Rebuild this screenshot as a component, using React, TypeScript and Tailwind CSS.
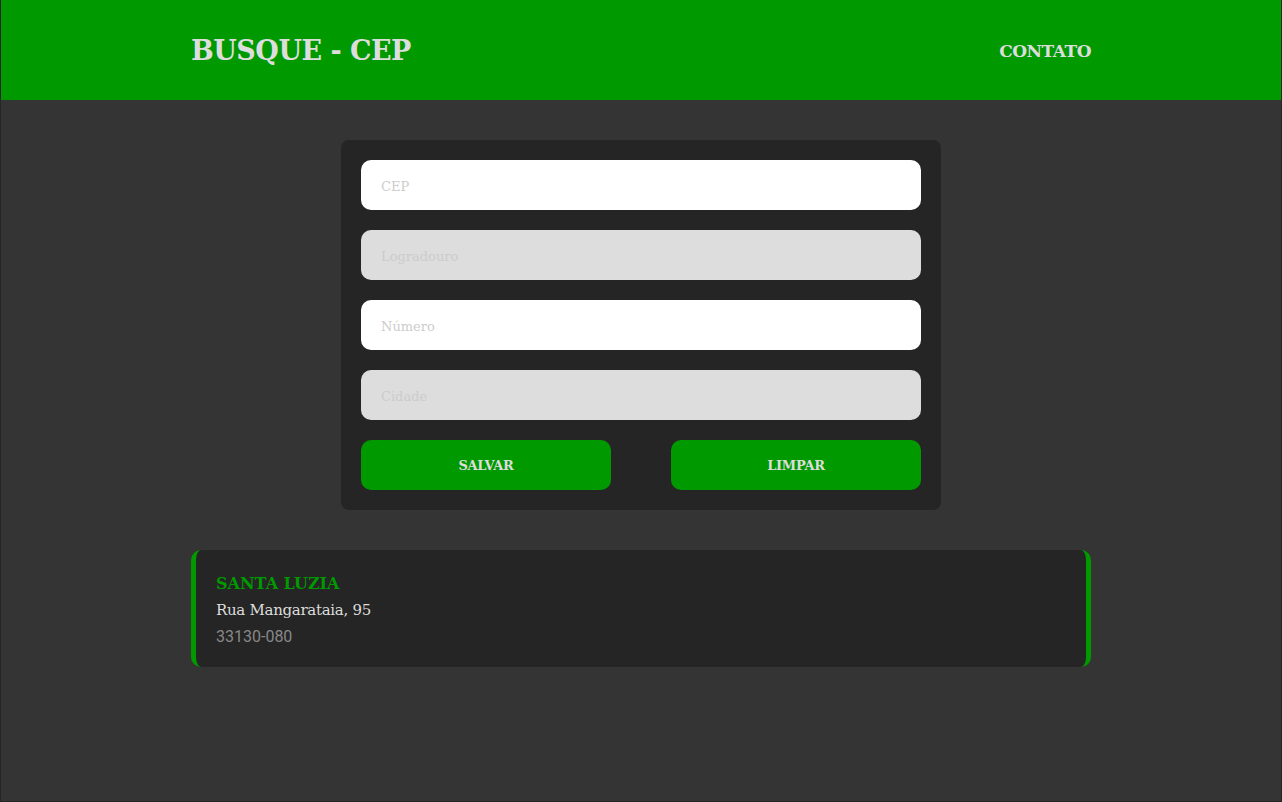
import React from 'react'

const slab = { fontFamily: '"DejaVu Serif", "Liberation Serif", serif' }

interface Field {
  placeholder: string
  disabled: boolean
}

const FIELDS: Field[] = [
  { placeholder: 'CEP', disabled: false },
  { placeholder: 'Logradouro', disabled: true },
  { placeholder: 'Número', disabled: false },
  { placeholder: 'Cidade', disabled: true }
]

export default function App() {
  return (
    <div
      className="h-[802px] w-full bg-[#343434] border-x border-b border-[#262626] flex flex-col"
      style={slab}
    >
      {/* Header */}
      <header className="h-[100px] bg-[#009900] flex-shrink-0">
        <div className="w-[900px] mx-auto h-full flex items-center justify-between">
          <h1 className="text-[27px] font-bold text-[#dddddd] tracking-[-0.5px] pt-[3px]">BUSQUE - CEP</h1>
          <a className="text-[17px] font-bold text-[#dddddd] tracking-[-0.5px] pt-[3px]">CONTATO</a>
        </div>
      </header>

      {/* Form */}
      <div className="w-[600px] mx-auto mt-10 bg-[#252525] rounded-lg p-5 flex flex-col gap-5">
        {FIELDS.map((field) => (
          <input
            key={field.placeholder}
            placeholder={field.placeholder}
            disabled={field.disabled}
            className={`h-[50px] w-full rounded-[10px] px-5 pt-[2px] text-[13px] outline-none placeholder:text-[#cccccc] ${
              field.disabled ? 'bg-[#dddddd]' : 'bg-white'
            }`}
            style={slab}
          />
        ))}
        <div className="flex justify-between">
          <button className="w-[250px] h-[50px] rounded-[10px] bg-[#009900] pt-[2px] text-[13px] font-bold text-[#dddddd] tracking-[-0.3px]">
            SALVAR
          </button>
          <button className="w-[250px] h-[50px] rounded-[10px] bg-[#009900] pt-[2px] text-[13px] font-bold text-[#dddddd] tracking-[-0.3px]">
            LIMPAR
          </button>
        </div>
      </div>

      {/* Result */}
      <div className="w-[900px] mx-auto mt-10 bg-[#252525] rounded-[10px] border-x-[5px] border-[#009900] px-5 pt-[21px] pb-[17px] flex flex-col">
        <span className="text-[16px] font-bold text-[#009900] leading-[26px] tracking-[0px]">SANTA LUZIA</span>
        <span className="text-[15px] text-[#dddddd] leading-[27px] tracking-[-0.3px]">Rua Mangarataia, 95</span>
        <span className="text-[16px] text-[#888888] leading-[26px]" style={{ fontFamily: 'Roboto, sans-serif' }}>
          33130-080
        </span>
      </div>
    </div>
  )
}
